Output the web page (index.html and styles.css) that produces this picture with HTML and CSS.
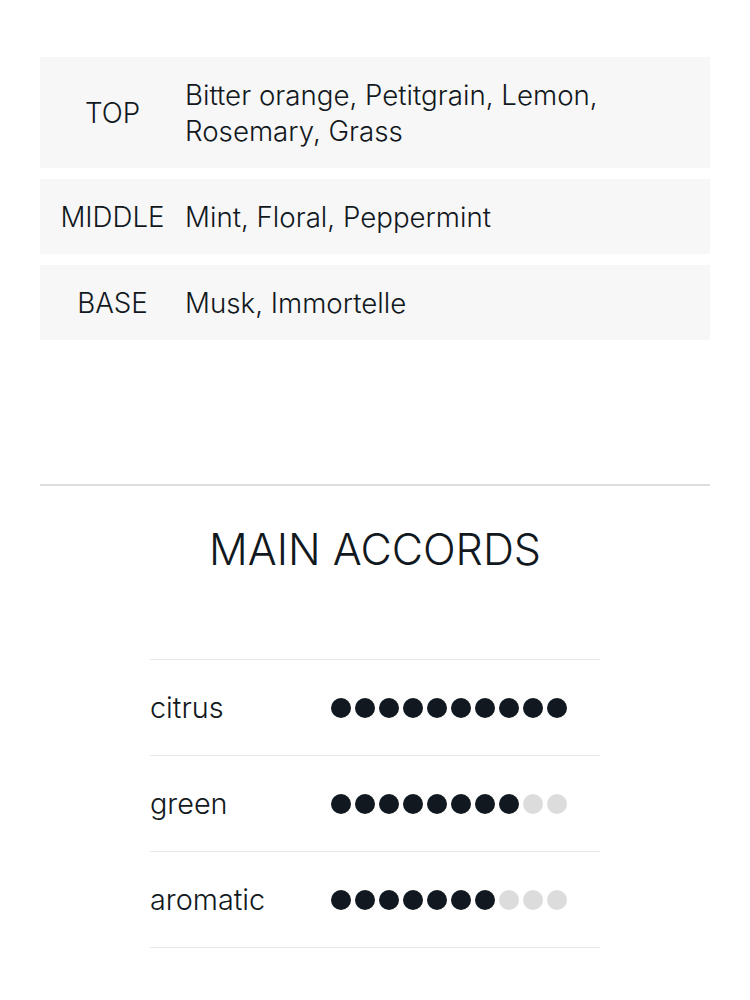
FILE: index.html
```html
<!DOCTYPE html>
<html lang="en">
<head>
<meta charset="utf-8">
<link rel="stylesheet" href="styles.css">
</head>
<body>
<div class="page">
  <div class="notes">
    <div class="note-row">
      <div class="note-label">TOP</div>
      <div class="note-value">Bitter orange, Petitgrain, Lemon, Rosemary, Grass</div>
    </div>
    <div class="note-row">
      <div class="note-label">MIDDLE</div>
      <div class="note-value">Mint, Floral, Peppermint</div>
    </div>
    <div class="note-row">
      <div class="note-label">BASE</div>
      <div class="note-value">Musk, Immortelle</div>
    </div>
  </div>

  <hr class="divider">

  <h2 class="section-title">MAIN ACCORDS</h2>

  <div class="accords">
    <div class="accord-row">
      <div class="accord-name">citrus</div>
      <div class="dots">
        <span class="dot on"></span><span class="dot on"></span><span class="dot on"></span><span class="dot on"></span><span class="dot on"></span><span class="dot on"></span><span class="dot on"></span><span class="dot on"></span><span class="dot on"></span><span class="dot on"></span>
      </div>
    </div>
    <div class="accord-row">
      <div class="accord-name">green</div>
      <div class="dots">
        <span class="dot on"></span><span class="dot on"></span><span class="dot on"></span><span class="dot on"></span><span class="dot on"></span><span class="dot on"></span><span class="dot on"></span><span class="dot on"></span><span class="dot"></span><span class="dot"></span>
      </div>
    </div>
    <div class="accord-row">
      <div class="accord-name">aromatic</div>
      <div class="dots">
        <span class="dot on"></span><span class="dot on"></span><span class="dot on"></span><span class="dot on"></span><span class="dot on"></span><span class="dot on"></span><span class="dot on"></span><span class="dot"></span><span class="dot"></span><span class="dot"></span>
      </div>
    </div>
  </div>
</div>
</body>
</html>
```

FILE: styles.css
```css
* { box-sizing: border-box; }

html, body {
  margin: 0;
  padding: 0;
  background: #ffffff;
}

body {
  font-family: Inter, "Noto Sans", "Liberation Sans", sans-serif;
  font-weight: 300;
  color: #111820;
}

.page {
  padding: 57px 40px 0;
}

.notes {
  display: flex;
  flex-direction: column;
  gap: 11px;
}

.note-row {
  display: flex;
  align-items: center;
  background: #f7f7f7;
  padding: 20px 0 19px;
}

.note-label {
  width: 145px;
  flex: none;
  text-align: center;
  font-size: 27.7px;
  line-height: 36px;
}

.note-value {
  flex: 1;
  font-size: 27.7px;
  line-height: 36px;
  padding-right: 100px;
}

.divider {
  margin: 144px 0 0;
  border: 0;
  border-top: 2px solid #dedede;
  height: 0;
}

.section-title {
  margin: 37px 0 0;
  text-align: center;
  font-weight: 300;
  font-size: 43px;
  line-height: 52px;
  letter-spacing: 0;
}

.accords {
  width: 450px;
  margin: 84px auto 0;
  border-top: 1px solid #e8e8e8;
}

.accord-row {
  display: flex;
  align-items: center;
  height: 96px;
  border-bottom: 1px solid #e8e8e8;
}

.accord-name {
  width: 181px;
  flex: none;
  font-size: 28.8px;
}

.dots {
  display: flex;
  gap: 4px;
}

.dot {
  width: 20px;
  height: 20px;
  border-radius: 50%;
  background: #dcdcdc;
}

.dot.on {
  background: #111820;
}
```
